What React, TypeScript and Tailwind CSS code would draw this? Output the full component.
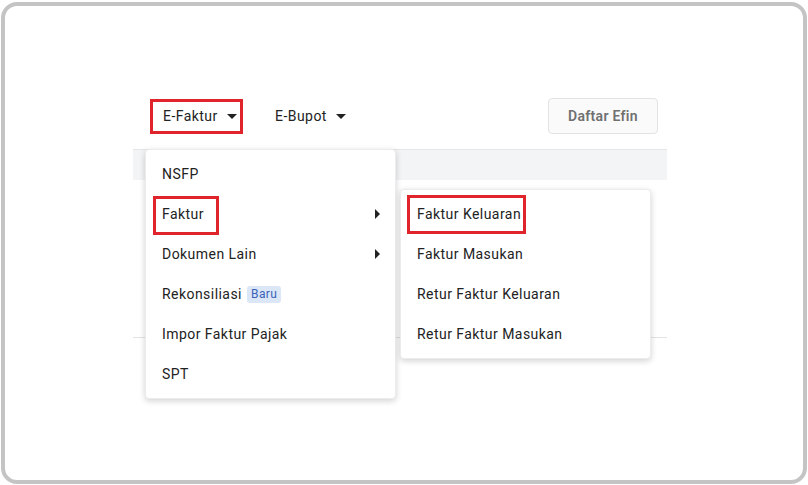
import React from "react";

const MAIN = ["NSFP", "Faktur", "Dokumen Lain", "Rekonsiliasi", "Impor Faktur Pajak", "SPT"];
const SUB = ["Faktur Keluaran", "Faktur Masukan", "Retur Faktur Keluaran", "Retur Faktur Masukan"];

function Caret() {
  return (
    <svg width="10" height="5" viewBox="0 0 10 5" className="ml-[9px]">
      <path d="M0 0 L10 0 L5 5 Z" fill="#222" />
    </svg>
  );
}

function ArrowRight() {
  return (
    <svg width="5" height="10" viewBox="0 0 5 10">
      <path d="M0 0 L5 5 L0 10 Z" fill="#222" />
    </svg>
  );
}

export default function App() {
  return (
    <div className="w-[808px] h-[485px] bg-white pt-[2px] pl-[1px]" style={{ fontFamily: "Roboto, 'Liberation Sans', sans-serif" }}>
      <div className="w-[806px] h-[482px] border-4 border-[#c4c4c4] rounded-[16px] pt-[92px] pl-[128px]">
        <div className="relative w-[534px] text-[14px] text-[#222] tracking-[0.45px]">
          {/* top nav */}
          <div className="flex items-center h-[36px]">
            <div className="ml-[17px] h-[35px] w-[93px] border-[3px] border-[#e0242b] flex items-center pl-[10px]">
              <span>E-Faktur</span>
              <Caret />
            </div>
            <div className="ml-[32px] flex items-center">
              <span>E-Bupot</span>
              <Caret />
            </div>
            <button className="ml-auto mr-[9px] h-[36px] w-[110px] rounded-[4px] border border-[#e3e3e3] bg-[#fafafa] text-[#707070] font-semibold tracking-[0.3px]">
              Daftar Efin
            </button>
          </div>

          {/* table header */}
          <div className="mt-[15px] h-[31px] bg-[#f3f4f6] border-t border-[#e6e6e6]" />
          <div className="h-[157px]" />
          <div className="border-t border-[#e3e3e3]" />

          {/* main dropdown */}
          <div className="absolute left-[12px] top-[51px] w-[251px] rounded-[4px] bg-white py-[4px] shadow-[0_2px_6px_rgba(0,0,0,0.18)] border border-[#ececec]">
            {MAIN.map((m) => (
              <div key={m} className="relative h-[40px] flex items-center pl-[16px] pr-[15px]">
                {m === "Faktur" && (
                  <div className="absolute left-[7px] top-[2px] w-[66px] h-[39px] border-[3px] border-[#e0242b]" />
                )}
                <span>{m}</span>
                {m === "Rekonsiliasi" && (
                  <span className="ml-[5px] px-[4px] h-[17px] leading-[17px] rounded-[3px] bg-[#dbe6f7] text-[#3a63b8] text-[12px]">
                    Baru
                  </span>
                )}
                {(m === "Faktur" || m === "Dokumen Lain") && (
                  <span className="ml-auto">
                    <ArrowRight />
                  </span>
                )}
              </div>
            ))}
          </div>

          {/* sub dropdown */}
          <div className="absolute left-[267px] top-[91px] w-[251px] rounded-[4px] bg-white py-[4px] shadow-[0_2px_6px_rgba(0,0,0,0.18)] border border-[#ececec]">
            {SUB.map((s) => (
              <div key={s} className="relative h-[40px] flex items-center pl-[16px]">
                {s === "Faktur Keluaran" && (
                  <div className="absolute left-[6px] top-[1px] w-[119px] h-[39px] border-[3px] border-[#e0242b]" />
                )}
                <span>{s}</span>
              </div>
            ))}
          </div>
        </div>
      </div>
    </div>
  );
}
